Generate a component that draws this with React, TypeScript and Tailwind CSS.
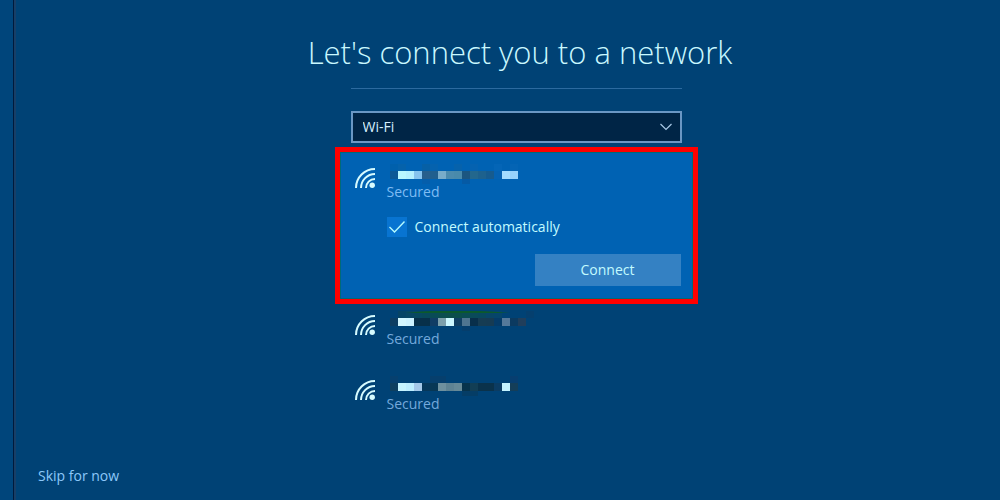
import React from "react";

type Tile = [x: number, y: number, fill: string];

interface Network {
  id: string;
  tiles: Tile[];
}

const selectedTiles: Tile[] = [
  [0, 0, "#0060ac"], [8, 0, "#0562ab"], [32, 0, "#0660a6"], [40, 0, "#0562ae"], [64, 0, "#0662ac"], [80, 0, "#0562b0"],
  [104, 0, "#0465b6"], [120, 0, "#0464b4"],
  [0, 8, "#0c5896"], [8, 8, "#b9f6ff"], [16, 8, "#b4f0ff"], [24, 8, "#86c3ee"], [32, 8, "#285f8c"], [40, 8, "#205f8e"],
  [48, 8, "#79acc9"], [56, 8, "#4c8bad"], [64, 8, "#498aab"], [72, 8, "#1b5680"], [80, 8, "#23678d"], [88, 8, "#1d618d"],
  [96, 8, "#165b8e"], [104, 8, "#0562b2"], [112, 8, "#a3dcff"], [120, 8, "#96d2fb"],
  [32, 16, "#055eab"], [72, 16, "#055aa5"],
];

const others: Network[] = [
  {
    id: "second",
    tiles: [
      [8, 0, "#064466"], [16, 0, "#084765"], [24, 0, "#084860"], [32, 0, "#08495a"], [40, 0, "#094b56"], [48, 0, "#0a4d50"],
      [56, 0, "#0b4e4c"], [64, 0, "#0b4e4c"], [72, 0, "#0a4c53"], [80, 0, "#0a4a5a"], [88, 0, "#08485e"], [96, 0, "#084567"],
      [104, 0, "#06456b"],
      [0, 8, "#0d3e63"], [8, 8, "#d3f6ff"], [16, 8, "#cdf2ff"], [24, 8, "#07304a"], [32, 8, "#07304a"], [40, 8, "#103d65"],
      [48, 8, "#7c9fab"], [56, 8, "#ccf7ff"], [64, 8, "#103f63"], [72, 8, "#4f7590"], [80, 8, "#082f4b"], [88, 8, "#163c53"],
      [96, 8, "#163b53"], [104, 8, "#053b68"], [112, 8, "#55799a"], [120, 8, "#0b3a60"], [128, 8, "#203e5b"],
      [72, 16, "#053e6c"], [136, 0, "#053f6e"],
    ],
  },
  {
    id: "third",
    tiles: [
      [0, 0, "#06406f"], [40, 0, "#063f6d"], [48, 0, "#063f6d"], [120, 0, "#073e70"],
      [0, 8, "#0d3f60"], [8, 8, "#c6f4ff"], [16, 8, "#bdeeff"], [24, 8, "#a4c8e9"], [32, 8, "#06385b"], [40, 8, "#073755"],
      [48, 8, "#6e909e"], [56, 8, "#5f8393"], [64, 8, "#668997"], [72, 8, "#07334c"], [80, 8, "#123e55"], [88, 8, "#0a324b"],
      [96, 8, "#0a324b"], [104, 8, "#0b3c63"], [112, 8, "#c3f3ff"], [120, 8, "#143e59"],
      [72, 16, "#053d66"], [80, 16, "#053d66"],
    ],
  },
];

function WifiIcon() {
  return (
    <svg viewBox="0 0 20 20" className="mt-1 size-5 shrink-0" fill="none" stroke="#d6fbff" strokeWidth="2" aria-hidden="true">
      <path d="M1 20A19 19 0 0 1 20 1" />
      <path d="M6 20A14 14 0 0 1 20 6" />
      <path d="M11 20A9 9 0 0 1 20 11" />
      <circle cx="17.2" cy="17.2" r="2.7" fill="#d6fbff" stroke="none" />
    </svg>
  );
}

function NetworkLabel({ tiles, selected = false }: { tiles: Tile[]; selected?: boolean }) {
  return (
    <div className="flex gap-3">
      <WifiIcon />
      <div>
        <svg viewBox="0 0 146 20" width="146" height="20" className="ml-[3px] block" shapeRendering="crispEdges" aria-hidden="true">
          {tiles.map(([x, y, fill]) => (
            <rect key={`${x}-${y}`} x={x} y={y - 1} width="8" height="8" fill={fill} />
          ))}
          {!selected && tiles === others[0].tiles && (
            <path d="M16 2Q62-3 120 2Z" fill="#0b5a2c" shapeRendering="auto" />
          )}
        </svg>
        <p className={selected ? "text-sm leading-4 text-[#7fbcf3]" : "text-sm leading-4 text-[#74a9dc]"}>Secured</p>
      </div>
    </div>
  );
}

export default function App() {
  return (
    <div className="flex min-h-screen bg-[#004275] font-['Open_Sans','Noto_Sans',sans-serif]">
      <div className="w-3.5 shrink-0 border-r border-[#001a3c] bg-[#00457b]" />
      <main className="flex min-w-0 flex-1 flex-col border-l-2 border-[#173f68] pr-1 pl-5">
        <h1 className="pt-8 pl-2 text-center text-[31px] leading-10 font-light text-[#c9f8ff]">
          Let's connect you to a network
        </h1>
        <div className="mx-auto mt-4 w-full max-w-[363px]">
          <div className="mx-4 border-t border-[#2c6a9f] pt-[22px]">
            <div className="relative">
              <select
                aria-label="Network type"
                defaultValue="wifi"
                className="block h-8 w-full appearance-none border-2 border-[#6a97c4] bg-[#002546] px-2.5 text-sm leading-5 text-[#d5efff]"
              >
                <option value="wifi">Wi-Fi</option>
              </select>
              <svg
                viewBox="0 0 12 7"
                className="pointer-events-none absolute top-3 right-2.5 h-2 w-3"
                fill="none"
                stroke="#a9c9e6"
                strokeWidth="1.2"
                aria-hidden="true"
              >
                <path d="M.5.5 6 6 11.5.5" />
              </svg>
            </div>
          </div>

          <section className="mt-1 border-5 border-[#ff0000]">
            <div className="border border-[#006a78] bg-[#0062b3] pt-[11px] pr-[11px] pb-3 pl-3.5">
              <NetworkLabel tiles={selectedTiles} selected />
              <label className="mt-[17px] ml-8 flex items-center gap-2 text-sm leading-5 text-[#c3fbff]">
                <span className="grid size-5 place-items-center bg-[#0874d1]">
                  <input type="checkbox" defaultChecked className="peer col-start-1 row-start-1 size-5 appearance-none" />
                  <svg
                    viewBox="0 0 20 20"
                    className="pointer-events-none invisible col-start-1 row-start-1 size-5 peer-checked:visible"
                    fill="none"
                    stroke="#b5fbff"
                    strokeWidth="1.4"
                    aria-hidden="true"
                  >
                    <path d="M2.5 10 7.5 15 17.5 4.5" />
                  </svg>
                </span>
                Connect automatically
              </label>
              <div className="mt-[17px] flex justify-end">
                <button type="button" className="h-8 w-[146px] bg-[#3481c3] text-sm text-[#c3fbff]">
                  Connect
                </button>
              </div>
            </div>
          </section>

          <ul className="mt-[7px] flex flex-col gap-[29px] pl-5">
            {others.map((network) => (
              <li key={network.id}>
                <NetworkLabel tiles={network.tiles} />
              </li>
            ))}
          </ul>
        </div>
        <footer className="mt-auto pb-[13px] pl-0.5">
          <a href="#skip" className="text-sm leading-5 text-[#8cc8fa]">
            Skip for now
          </a>
        </footer>
      </main>
    </div>
  );
}
